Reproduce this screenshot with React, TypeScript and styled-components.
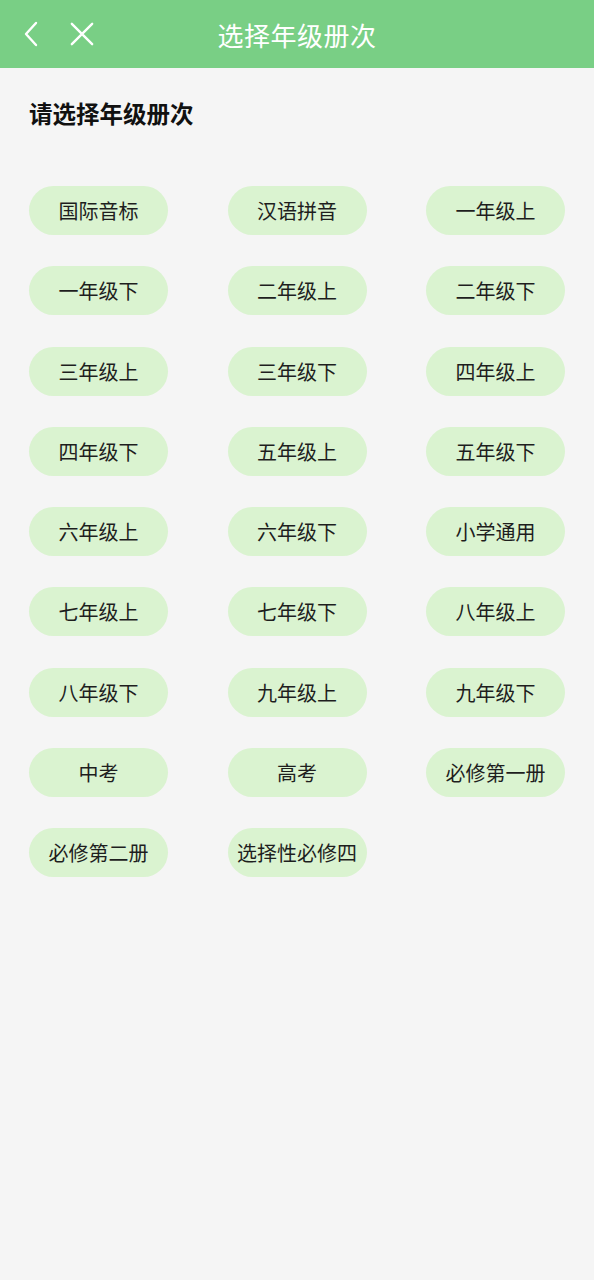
import React from "react";
import styled, { createGlobalStyle } from "styled-components";

const Global = createGlobalStyle`
  html, body { margin: 0; padding: 0; background: #f5f5f5; }
  body { font-family: "Noto Sans CJK SC", "Noto Sans", sans-serif; }
`;

const Page = styled.div`
  width: 594px;
  min-height: 1280px;
  background: #f5f5f5;
`;

const Header = styled.header`
  height: 68px;
  background: #79cf85;
  position: relative;
  display: flex;
  align-items: center;
  justify-content: center;
`;

const HeaderButtons = styled.div`
  position: absolute;
  left: 20px;
  top: 0;
  height: 68px;
  display: flex;
  align-items: center;
  gap: 26px;
`;

const IconButton = styled.button`
  border: 0;
  background: transparent;
  padding: 0;
  width: 24px;
  height: 28px;
  display: flex;
  align-items: center;
  justify-content: center;
`;

const Title = styled.h1`
  margin: 0;
  color: #fff;
  font-size: 26px;
  font-weight: 400;
  letter-spacing: 0.5px;
`;

const Content = styled.main`
  padding: 29px 29px 0;
`;

const Subtitle = styled.h2`
  margin: 0;
  font-size: 23.5px;
  line-height: 32px;
  font-weight: 700;
  color: #111;
`;

const Grid = styled.div`
  display: grid;
  grid-template-columns: repeat(3, 139px);
  justify-content: space-between;
  row-gap: 31.25px;
  margin-top: 57px;
`;

const Pill = styled.button`
  height: 49px;
  border: 0;
  border-radius: 25px;
  background: #daf3d0;
  color: #1e1e1e;
  font-family: "Noto Sans CJK SC", "Noto Sans", sans-serif;
  font-size: 20px;
  padding: 0;
  display: flex;
  align-items: center;
  justify-content: center;
  white-space: nowrap;
`;

const items = [
  "国际音标", "汉语拼音", "一年级上",
  "一年级下", "二年级上", "二年级下",
  "三年级上", "三年级下", "四年级上",
  "四年级下", "五年级上", "五年级下",
  "六年级上", "六年级下", "小学通用",
  "七年级上", "七年级下", "八年级上",
  "八年级下", "九年级上", "九年级下",
  "中考", "高考", "必修第一册",
  "必修第二册", "选择性必修四",
];

export default function App() {
  return (
    <Page>
      <Global />
      <Header>
        <HeaderButtons>
          <IconButton aria-label="back">
            <svg width="24" height="28" viewBox="0 0 24 28" fill="none">
              <path d="M16 3 L6 14 L16 25" stroke="#fff" strokeWidth="2.4" strokeLinecap="round" strokeLinejoin="round" />
            </svg>
          </IconButton>
          <IconButton aria-label="close">
            <svg width="26" height="26" viewBox="0 0 26 26" fill="none">
              <path d="M2 2 L24 24 M24 2 L2 24" stroke="#fff" strokeWidth="2.6" strokeLinecap="round" />
            </svg>
          </IconButton>
        </HeaderButtons>
        <Title>选择年级册次</Title>
      </Header>
      <Content>
        <Subtitle>请选择年级册次</Subtitle>
        <Grid>
          {items.map((t) => (
            <Pill key={t}>{t}</Pill>
          ))}
        </Grid>
      </Content>
    </Page>
  );
}
